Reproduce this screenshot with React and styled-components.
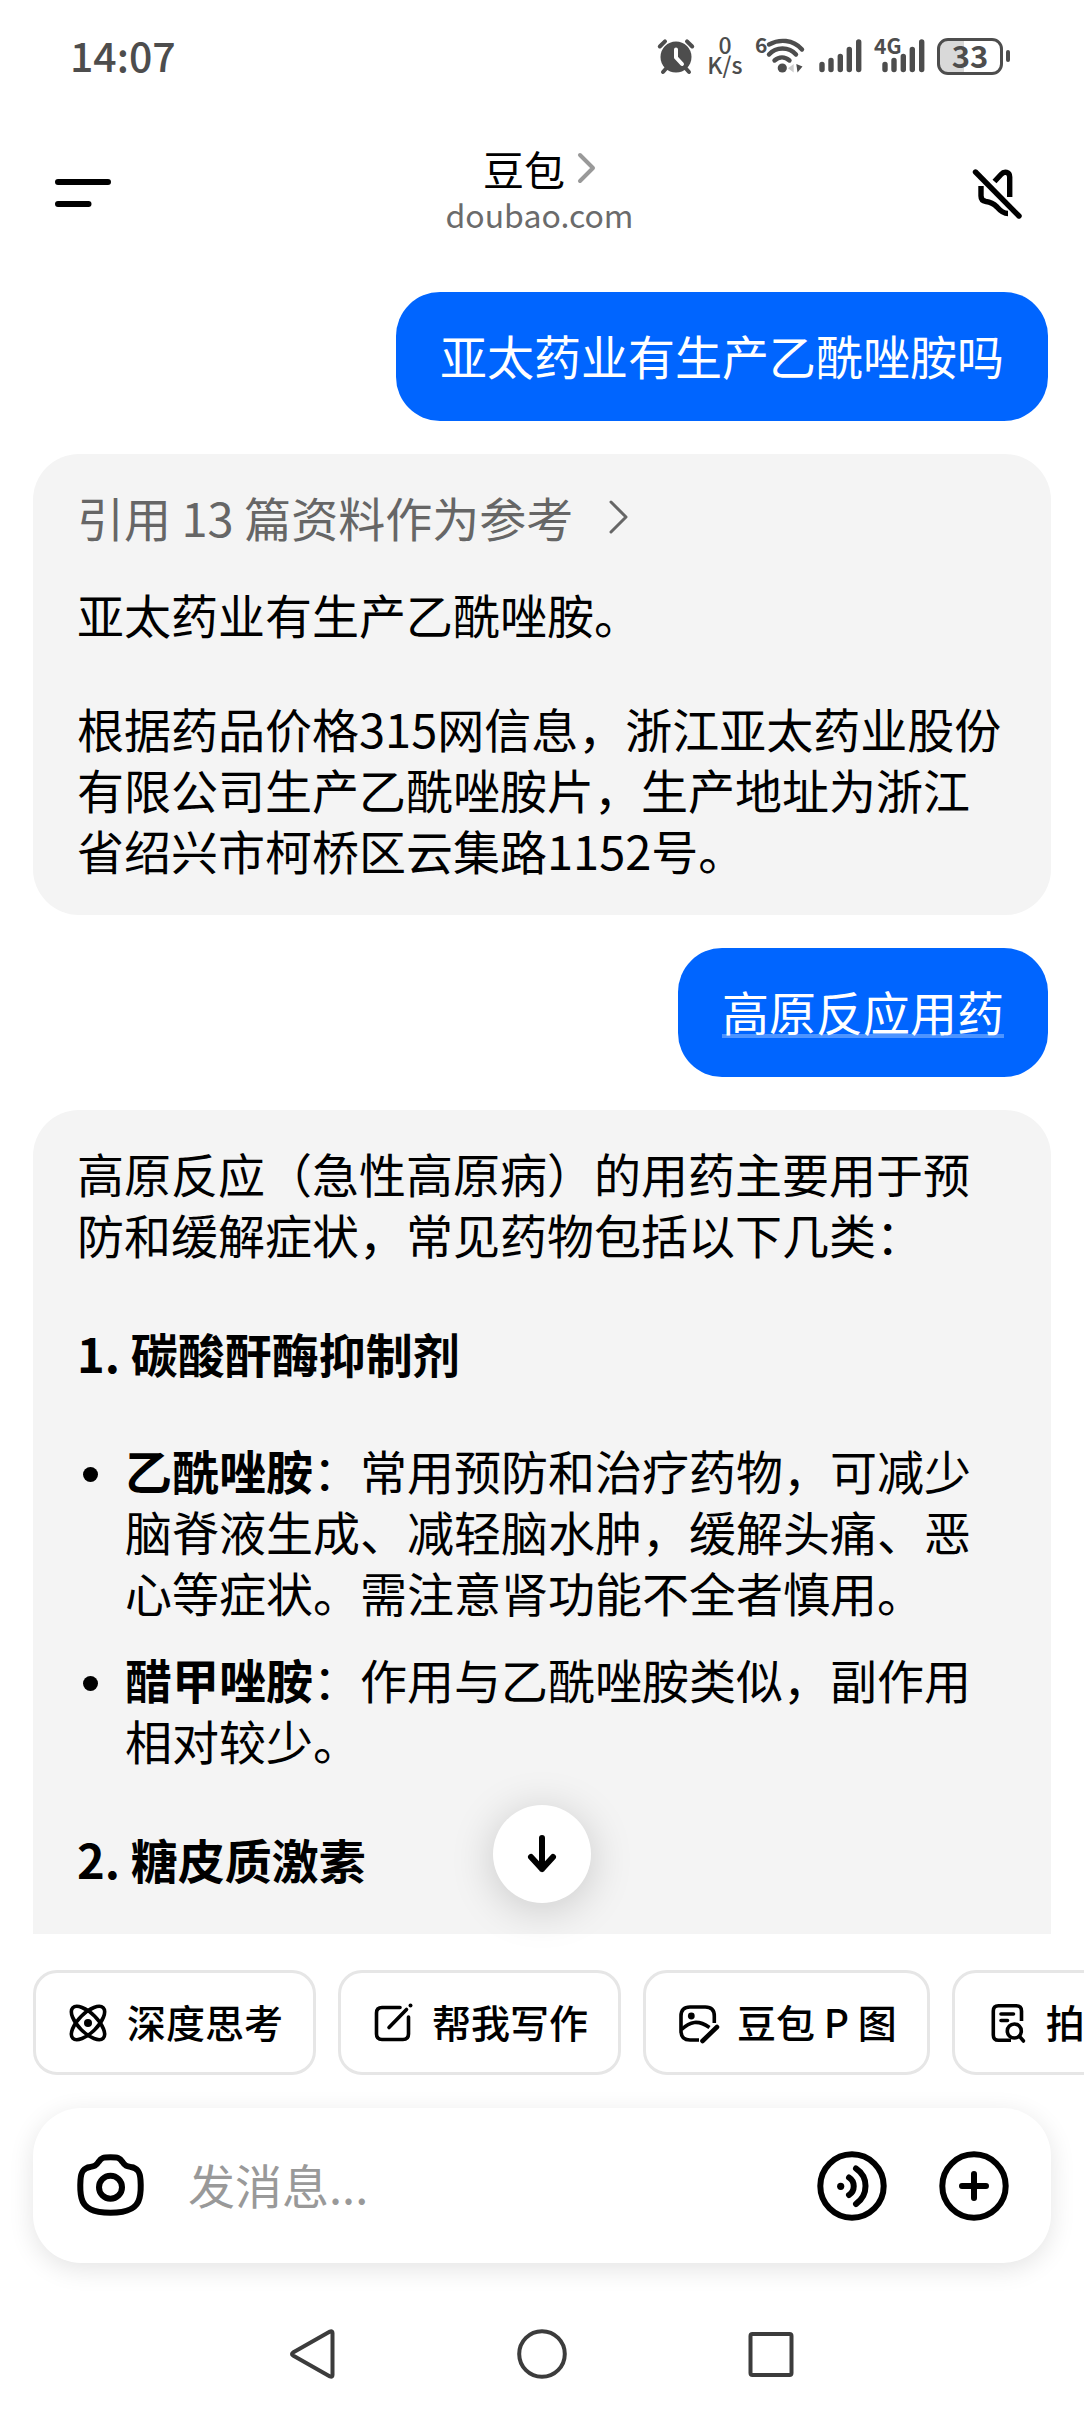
import React from "react";
import styled, { createGlobalStyle } from "styled-components";

const GlobalStyle = createGlobalStyle`
  *, *::before, *::after { box-sizing: border-box; }
  html, body, #root { height: 100%; }
  body {
    margin: 0;
    background: #fff;
    color: #000;
    font-family: "Noto Sans CJK SC", "Noto Sans", sans-serif;
  }
  button, input { font: inherit; color: inherit; }
  p, h1, h3, ul { margin: 0; padding: 0; }
  svg { display: block; flex: none; overflow: visible; }
`;

const Screen = styled.div`
  display: flex;
  flex-direction: column;
  height: 100vh;
  overflow: hidden;
`;

/* ---------- status bar ---------- */

const StatusBar = styled.div`
  display: flex;
  flex: none;
  align-items: center;
  justify-content: space-between;
  height: 112px;
  padding: 0 74px 0 70px;
  color: #4d4d4d;
`;

const Clock = styled.time`
  padding-bottom: 4px;
  font-size: 41px;
  font-weight: 500;
  line-height: 48px;
`;

const StatusIcons = styled.div`
  display: flex;
  align-items: center;
  gap: 12px;
`;

const NetSpeed = styled.div`
  display: flex;
  flex-direction: column;
  align-items: center;
  width: 36px;
  padding-bottom: 4px;
  font-size: 23px;
  font-weight: 500;
  line-height: 20px;
`;

const SmallLabel = styled.text`
  font-size: 21px;
  font-weight: 700;
  fill: #4d4d4d;
`;

const Battery = styled.div`
  display: flex;
  align-items: center;
  gap: 3px;

  &::after {
    content: "";
    width: 4px;
    height: 12px;
    border-radius: 2px;
    background: #4d4d4d;
  }
`;

const BatteryBody = styled.div`
  width: 66px;
  height: 37px;
  border: 3px solid #4d4d4d;
  border-radius: 11px;
  background: linear-gradient(to right, #d9d9d9 40%, transparent 40%);
  font-size: 31px;
  font-weight: 700;
  line-height: 28px;
  text-align: center;
`;

/* ---------- header ---------- */

const Header = styled.header`
  display: grid;
  flex: none;
  grid-template-columns: 1fr auto 1fr;
  align-items: center;
  height: 162px;
  padding: 0 60px 0 55px;
`;

const IconButton = styled.button`
  display: flex;
  flex: none;
  justify-self: ${(p) => p.$side || "center"};
  padding: 0;
  border: 0;
  background: none;
  cursor: pointer;
`;

const TitleBlock = styled.div`
  display: flex;
  flex-direction: column;
  align-items: center;
`;

const TitleButton = styled.button`
  display: flex;
  align-items: center;
  gap: 13px;
  padding: 0;
  border: 0;
  background: none;
  font-size: 41px;
  line-height: 46px;
  cursor: pointer;
`;

const Subtitle = styled.div`
  padding-bottom: 4px;
  color: #6b6b6b;
  font-size: 32px;
  line-height: 46px;
`;

/* ---------- conversation ---------- */

const ChatArea = styled.main`
  position: relative;
  display: flex;
  flex: 1;
  min-height: 0;
`;

const Messages = styled.div`
  display: flex;
  flex: 1;
  flex-direction: column;
  gap: 33px;
  overflow: hidden;
  padding: 18px 33px 0;
  font-size: 47px;
  line-height: 61px;
`;

const UserBubble = styled.div`
  flex: none;
  align-self: flex-end;
  margin-right: 3px;
  padding: 32px 44px 36px;
  border-radius: 44px;
  background: #0065ff;
  color: #fff;
`;

const TermLink = styled.a`
  color: inherit;
  text-decoration: underline #4d94ff 4px;
  text-underline-offset: 3px;
  text-decoration-skip-ink: none;
`;

const Reply = styled.article`
  flex: ${(p) => (p.$open ? "1 0 auto" : "none")};
  padding: 32px 44px 35px;
  border-radius: ${(p) => (p.$open ? "46px 46px 0 0" : "46px")};
  background: #f4f4f4;
`;

const Sources = styled.button`
  display: flex;
  align-items: center;
  gap: 36px;
  margin-bottom: 36px;
  padding: 0;
  border: 0;
  background: none;
  color: #666;
  line-height: 61px;
  cursor: pointer;
`;

const Paragraph = styled.p`
  & + & { margin-top: 53px; }
`;

const SectionTitle = styled.h3`
  margin: 58px 0 56px;
  font-size: 47px;
  font-weight: 700;
`;

const Drugs = styled.ul`
  display: flex;
  flex-direction: column;
  gap: 26px;
  list-style: none;
`;

const Drug = styled.li`
  display: flex;
  gap: 27px;

  &::before {
    content: "";
    flex: none;
    width: 15px;
    height: 15px;
    margin: 28px 0 0 6px;
    border-radius: 50%;
    background: #000;
  }
`;

const ScrollDown = styled.button`
  position: absolute;
  bottom: 31px;
  left: 50%;
  display: flex;
  align-items: center;
  justify-content: center;
  width: 98px;
  height: 98px;
  margin-left: -49px;
  padding: 0;
  border: 0;
  border-radius: 50%;
  background: #fff;
  box-shadow: 0 6px 44px rgba(0, 0, 0, 0.18);
  cursor: pointer;
`;

/* ---------- footer ---------- */

const Chips = styled.div`
  display: flex;
  flex: none;
  gap: 22px;
  margin: 36px 0 33px;
  padding-left: 33px;
  overflow: hidden;
`;

const Chip = styled.button`
  display: flex;
  flex: none;
  align-items: center;
  gap: 17px;
  height: 105px;
  padding: 0 30px;
  border: 3px solid #e6e6e6;
  border-radius: 24px;
  background: #fff;
  font-size: 39px;
  font-weight: 500;
  white-space: nowrap;
  cursor: pointer;
`;

const ChipLabel = styled.span`
  padding-bottom: 4px;
`;

const Composer = styled.form`
  display: flex;
  flex: none;
  align-items: center;
  height: 155px;
  margin: 0 33px 32px;
  padding: 0 42px;
  border-radius: 48px;
  background: #fff;
  box-shadow: 0 6px 26px rgba(0, 0, 0, 0.11);
`;

const MessageInput = styled.input`
  flex: 1;
  min-width: 0;
  margin: 0 43px;
  padding: 0 0 4px;
  border: 0;
  outline: 0;
  background: none;
  font-size: 47px;
  line-height: 61px;

  &::placeholder { color: #999; opacity: 1; }
`;

const ComposerActions = styled.div`
  display: flex;
  gap: 52px;
`;

const SystemNav = styled.nav`
  display: flex;
  flex: none;
  align-items: center;
  justify-content: center;
  gap: 175px;
  height: 117px;
`;

/* ---------- drawings ---------- */

const Glyph = ({ w, h = w, sw = 4, color = "#000", cap = "round", children }) => (
  <svg
    width={w}
    height={h}
    viewBox={`0 0 ${w} ${h}`}
    fill="none"
    stroke={color}
    strokeWidth={sw}
    strokeLinecap={cap}
    strokeLinejoin="round"
    aria-hidden="true"
  >
    {children}
  </svg>
);

const STATUS = "#4d4d4d";

const AlarmIcon = () => (
  <Glyph w={38} color={STATUS}>
    <circle cx="19" cy="20" r="15.5" fill={STATUS} stroke="none" />
    <path d="M2.8 9.5 8 4.3M35.2 9.5 30 4.3M6 35l4-4.5M32 35l-4-4.5" />
    <path d="M19 12.5V20.5L25 27" stroke="#fff" />
  </Glyph>
);

const WifiIcon = () => (
  <Glyph w={52} h={40} color={STATUS} sw={4.4}>
    <SmallLabel x="0" y="17" stroke="none">6</SmallLabel>
    <path d="M14 8.500C24 3 38 3 47 13.500" />
    <path d="M14 18.500C21 10.500 34 10.500 41 18.500" />
    <path d="M19.500 24.500C24 20.500 30 20.500 34.500 24.500" />
    <circle cx="27.300" cy="32" r="4.600" fill={STATUS} stroke="none" />
    <path d="M33 32.300 38.700 28V36.500Z" fill="#ccc" stroke="none" />
    <path d="M41.300 28 47.500 30.500 42.500 36.500Z" fill={STATUS} stroke="none" />
  </Glyph>
);

const SignalIcon = () => (
  <Glyph w={43} h={40} color={STATUS} sw={5.4}>
    <path d="M3 28.500V33.500M12 24.500V33.500M21.300 20.500V33.500M30.300 13.500V33.500M39.700 6V33.500" />
  </Glyph>
);

const Signal4GIcon = () => (
  <Glyph w={51} h={40} color={STATUS} sw={5.4}>
    <SmallLabel x="0" y="18" stroke="none">4G</SmallLabel>
    <path d="M11 28.500V33.500M20 24.500V33.500M29.300 20.500V33.500M38.300 13.500V33.500M47.700 6V33.500" />
  </Glyph>
);

const MenuIcon = () => (
  <Glyph w={56} h={28} sw={6}>
    <path d="M3 3H53M3 25H33.500" />
  </Glyph>
);

const MuteIcon = () => (
  <Glyph w={54} sw={5.4} cap="butt">
    <path d="M5.500 6 49 50" strokeLinecap="round" />
    <path d="M24.500 15.500 31 8.500C34.500 4.500 39.700 6 39.700 11V31" />
    <path d="M11 20V30C11 33.500 12.500 35 16 35.500C21 36 23.500 37.500 27 41C30 44.500 33 47.500 38 47.500" />
  </Glyph>
);

const ChevronIcon = ({ thin }) =>
  thin ? (
    <Glyph w={20} h={36} sw={3} color="#666">
      <path d="M2 3 17 18 2 33" />
    </Glyph>
  ) : (
    <Glyph w={18} h={30} sw={4} color="#999">
      <path d="M2 2 15 15 2 28" />
    </Glyph>
  );

const ArrowDownIcon = () => (
  <Glyph w={36} h={40} sw={6}>
    <path d="M18 4V35M7 23 18 35 29 23" />
  </Glyph>
);

const AtomIcon = () => (
  <Glyph w={44} sw={3.6}>
    <ellipse cx="22" cy="22" rx="21.500" ry="9.500" transform="rotate(45 22 22)" />
    <ellipse cx="22" cy="22" rx="21.500" ry="9.500" transform="rotate(-45 22 22)" />
    <circle cx="22" cy="22" r="4" fill="#000" stroke="none" />
  </Glyph>
);

const WriteIcon = () => (
  <Glyph w={44} sw={3.6}>
    <path d="M29 6.500H11Q5.500 6.500 5.500 12V33Q5.500 38.500 11 38.500H32Q37.500 38.500 37.500 33V16" />
    <path d="M18 26.500 35.500 8.500" />
    <path d="M39.500 4.500V4.600" strokeWidth="4" />
  </Glyph>
);

const PictureIcon = () => (
  <Glyph w={44} sw={3.6} cap="butt">
    <path d="M38.300 22V15Q38.300 6 29.300 6H14Q5 6 5 15V30Q5 39 14 39H23" />
    <path d="M5.500 28.500C14 20.500 22 18.500 33.500 26.500" />
    <circle cx="15.300" cy="15" r="3.400" fill="#000" stroke="none" />
    <path d="M41 26 26.500 40" strokeLinecap="round" strokeWidth="4.600" />
  </Glyph>
);

const DocSearchIcon = () => (
  <Glyph w={44} sw={3.6} cap="butt">
    <path d="M36.500 20V10Q36.500 4.800 31.300 4.800H13.500Q8.300 4.800 8.300 10V34Q8.300 39.300 13.500 39.300H26" />
    <path d="M16 13H28.500M16 19.500H22.500" strokeLinecap="round" />
    <circle cx="29.300" cy="30" r="7" />
    <path d="M34.500 35.300 38.500 40" strokeLinecap="round" />
  </Glyph>
);

const CameraIcon = () => (
  <Glyph w={70} sw={6}>
    <path d="M35.500 6.300C43 6.300 44.500 6.500 47.500 11C50 15 52 15.200 56 16C62.500 17 65 20.500 65.500 29C66 36 66 41 64.500 47C62 58 52 61.700 35.500 61.700C19 61.700 9 58 6.500 47C5 41 5 36 5.500 29C6 20.500 8.500 17 15 16C19 15.200 21 15 23.500 11C26.500 6.500 28 6.300 35.500 6.300Z" />
    <circle cx="35.500" cy="36.200" r="11.500" />
  </Glyph>
);

const VoiceIcon = () => (
  <Glyph w={70} sw={6}>
    <circle cx="35" cy="35" r="31.700" />
    <circle cx="23.700" cy="35.300" r="3.600" fill="#000" stroke="none" />
    <path d="M32 26.500C38.300 30.500 38.300 40 32 44" />
    <path d="M39 17.500C51.700 26 51.700 44 39 53" />
  </Glyph>
);

const PlusIcon = () => (
  <Glyph w={70} sw={6}>
    <circle cx="35" cy="35" r="31.700" />
    <path d="M35 23V47M23 35H47" />
  </Glyph>
);

const NAV = "#3c3c3c";

const BackIcon = () => (
  <Glyph w={54} color={NAV}>
    <path d="M44 4.500Q46.500 3.500 46.500 6V48Q46.500 50.500 44 49.500L7 28.500Q5 27 7 25.500Z" />
  </Glyph>
);

const HomeIcon = () => (
  <Glyph w={54} color={NAV}>
    <circle cx="27" cy="27" r="22.800" />
  </Glyph>
);

const RecentIcon = () => (
  <Glyph w={54} color={NAV}>
    <rect x="6.500" y="7" width="41" height="41" rx="2" />
  </Glyph>
);

/* ---------- data ---------- */

const drugs = [
  { name: "乙酰唑胺", note: "：常用预防和治疗药物，可减少脑脊液生成、减轻脑水肿，缓解头痛、恶心等症状。需注意肾功能不全者慎用。" },
  { name: "醋甲唑胺", note: "：作用与乙酰唑胺类似，副作用相对较少。" },
];

const shortcuts = [
  { label: "深度思考", Icon: AtomIcon },
  { label: "帮我写作", Icon: WriteIcon },
  { label: "豆包 P 图", Icon: PictureIcon },
  { label: "拍", Icon: DocSearchIcon },
];

export default function App() {
  return (
    <>
      <GlobalStyle />
      <Screen>
        <StatusBar>
          <Clock>14:07</Clock>
          <StatusIcons>
            <AlarmIcon />
            <NetSpeed>
              <span>0</span>
              <span>K/s</span>
            </NetSpeed>
            <WifiIcon />
            <SignalIcon />
            <Signal4GIcon />
            <Battery>
              <BatteryBody>33</BatteryBody>
            </Battery>
          </StatusIcons>
        </StatusBar>

        <Header>
          <IconButton type="button" $side="start" aria-label="菜单">
            <MenuIcon />
          </IconButton>
          <TitleBlock>
            <TitleButton type="button">
              豆包
              <ChevronIcon />
            </TitleButton>
            <Subtitle>doubao.com</Subtitle>
          </TitleBlock>
          <IconButton type="button" $side="end" aria-label="静音">
            <MuteIcon />
          </IconButton>
        </Header>

        <ChatArea>
          <Messages>
            <UserBubble>亚太药业有生产乙酰唑胺吗</UserBubble>
            <Reply>
              <Sources type="button">
                引用 13 篇资料作为参考
                <ChevronIcon thin />
              </Sources>
              <Paragraph>亚太药业有生产乙酰唑胺。</Paragraph>
              <Paragraph>
                根据药品价格315网信息，浙江亚太药业股份有限公司生产乙酰唑胺片，生产地址为浙江省绍兴市柯桥区云集路1152号。
              </Paragraph>
            </Reply>
            <UserBubble>
              <TermLink href="#term">高原反应用药</TermLink>
            </UserBubble>
            <Reply $open>
              <Paragraph>
                高原反应（急性高原病）的用药主要用于预防和缓解症状，常见药物包括以下几类：
              </Paragraph>
              <SectionTitle>1. 碳酸酐酶抑制剂</SectionTitle>
              <Drugs>
                {drugs.map((d) => (
                  <Drug key={d.name}>
                    <div>
                      <strong>{d.name}</strong>
                      {d.note}
                    </div>
                  </Drug>
                ))}
              </Drugs>
              <SectionTitle>2. 糖皮质激素</SectionTitle>
            </Reply>
          </Messages>
          <ScrollDown type="button" aria-label="滚动到底部">
            <ArrowDownIcon />
          </ScrollDown>
        </ChatArea>

        <Chips>
          {shortcuts.map(({ label, Icon }) => (
            <Chip key={label} type="button">
              <Icon />
              <ChipLabel>{label}</ChipLabel>
            </Chip>
          ))}
        </Chips>

        <Composer onSubmit={(e) => e.preventDefault()}>
          <IconButton type="button" aria-label="相机">
            <CameraIcon />
          </IconButton>
          <MessageInput type="text" placeholder="发消息..." aria-label="发消息" />
          <ComposerActions>
            <IconButton type="button" aria-label="语音">
              <VoiceIcon />
            </IconButton>
            <IconButton type="button" aria-label="更多">
              <PlusIcon />
            </IconButton>
          </ComposerActions>
        </Composer>

        <SystemNav>
          <IconButton type="button" aria-label="返回">
            <BackIcon />
          </IconButton>
          <IconButton type="button" aria-label="主屏幕">
            <HomeIcon />
          </IconButton>
          <IconButton type="button" aria-label="最近任务">
            <RecentIcon />
          </IconButton>
        </SystemNav>
      </Screen>
    </>
  );
}
